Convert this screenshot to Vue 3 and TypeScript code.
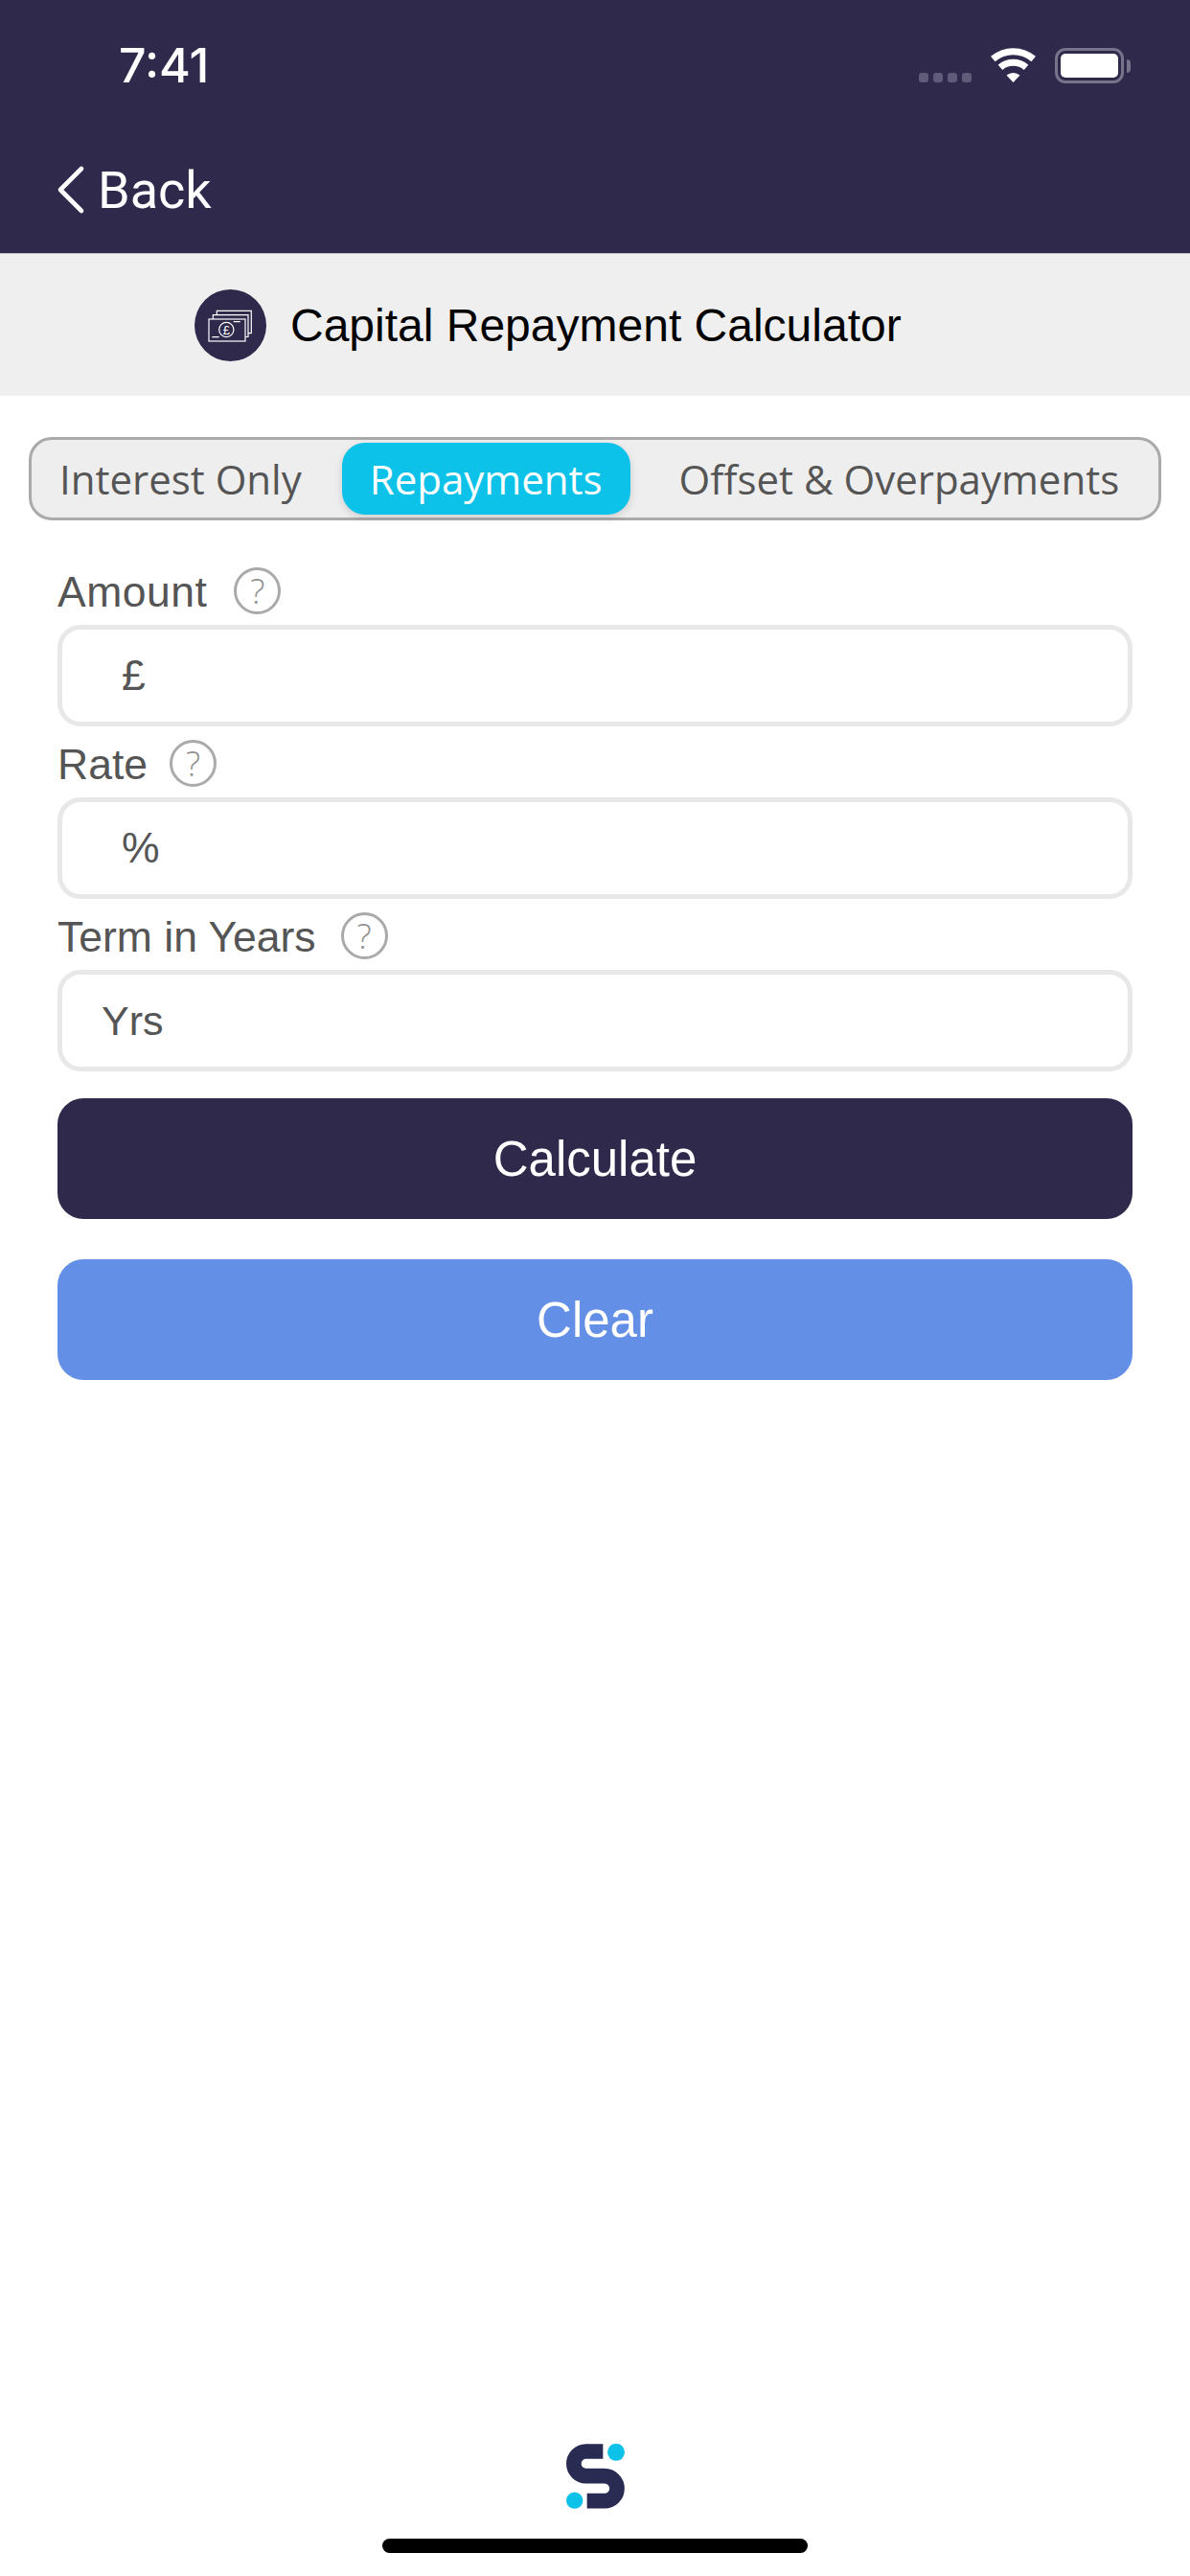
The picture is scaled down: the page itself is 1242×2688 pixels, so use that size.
<script setup lang="ts">
interface Field {
  label: string
  placeholder: string
  inset: string
}

const tabs: string[] = ['Interest Only', 'Repayments', 'Offset & Overpayments']
const activeTab = 'Repayments'
const fields: Field[] = [
  { label: 'Amount', placeholder: '£', inset: 'wide' },
  { label: 'Rate', placeholder: '%', inset: 'wide' },
  { label: 'Term in Years', placeholder: 'Yrs', inset: 'narrow' }
]
</script>

<template>
  <div class="screen">
    <header class="nav">
      <div class="status">
        <span class="time">7:41</span>
        <div class="indicators">
          <div class="signal"><i></i><i></i><i></i><i></i></div>
          <svg class="wifi" width="47" height="36" viewBox="0 0 47 36">
            <path d="M2.3 11.5A32.5 32.5 0 0 1 44.7 11.5" fill="none" stroke="#fff" stroke-width="7" />
            <path d="M10 20.4A20.5 20.5 0 0 1 37 20.4" fill="none" stroke="#fff" stroke-width="7" />
            <path d="M16.5 28.5A11 11 0 0 1 30.5 28.5L23.5 36Z" fill="#fff" />
          </svg>
          <div class="battery"><div class="charge"></div></div>
          <div class="nub"></div>
        </div>
      </div>
      <div class="back">
        <svg width="30" height="52" viewBox="0 0 30 52">
          <path d="M26 4L4 26L26 48" fill="none" stroke="#fff" stroke-width="4.6" stroke-linecap="round" stroke-linejoin="round" />
        </svg>
        <span>Back</span>
      </div>
    </header>

    <section class="title-bar">
      <svg class="title-icon" width="75" height="75" viewBox="0 0 75 75">
        <circle cx="37.5" cy="37.5" r="37.5" fill="#2f2a4c" />
        <g fill="none" stroke="#fff" stroke-width="1.2">
          <path d="M23.3 26.7V22.3H59.3V45.7H56" />
          <path d="M19.3 31V26.7H56V49.5H53" />
          <rect x="15" y="31" width="38" height="23" />
          <circle cx="33.3" cy="42" r="7.6" />
          <path d="M40.7 33.7H47.7M18.3 49.7H25.7" />
        </g>
        <text x="33.3" y="46.6" text-anchor="middle" fill="#fff" class="coin">£</text>
      </svg>
      <h1>Capital Repayment Calculator</h1>
    </section>

    <nav class="tabs">
      <span v-for="tab in tabs" :key="tab" class="tab" :class="{ active: tab === activeTab }">{{ tab }}</span>
    </nav>

    <form class="form" @submit.prevent>
      <div v-for="field in fields" :key="field.label" class="field">
        <div class="label-row">
          <label>{{ field.label }}</label>
          <span class="help">?</span>
        </div>
        <input class="input" :class="field.inset" type="text" :placeholder="field.placeholder" />
      </div>
      <button class="btn calculate" type="button">Calculate</button>
      <button class="btn clear" type="button">Clear</button>
    </form>

    <footer class="footer">
      <svg width="61" height="68" viewBox="90 90 183 203">
        <path d="M205 113.5H152A38.5 38.5 0 0 0 152 190.5H210A39 39 0 0 1 210 268.5H155" fill="none" stroke="#2a2b52" stroke-width="47" />
        <circle cx="246" cy="116" r="27" fill="#0cc2e8" />
        <circle cx="116" cy="267" r="26" fill="#0cc2e8" />
      </svg>
      <div class="home-bar"></div>
    </footer>
  </div>
</template>

<style>
html,
body {
  margin: 0;
  background: #fff;
}
</style>

<style scoped>
.screen {
  width: 1242px;
  height: 2688px;
  display: flex;
  flex-direction: column;
  background: #fff;
  overflow: hidden;
  font-family: "Liberation Sans", Arial, sans-serif;
}
.nav {
  height: 264px;
  box-sizing: border-box;
  flex: none;
  background: #2f2a4c;
  color: #fff;
}
.status {
  height: 172px;
  box-sizing: border-box;
  padding: 39px 62px 0 124px;
  display: flex;
  justify-content: space-between;
  align-items: flex-start;
}
.time {
  font-family: Inter, sans-serif;
  font-weight: 500;
  font-size: 50px;
  line-height: 58px;
}
.indicators {
  display: flex;
  align-items: flex-start;
  padding-top: 11px;
}
.signal {
  display: flex;
  gap: 5px;
  margin: 26px 20px 0 0;
}
.signal i {
  width: 10px;
  height: 10px;
  border-radius: 3px;
  background: #5f5b78;
}
.battery {
  width: 72px;
  height: 37px;
  box-sizing: border-box;
  border: 3px solid #76738a;
  border-radius: 11px;
  padding: 3px;
  margin-left: 20px;
}
.charge {
  width: 100%;
  height: 100%;
  background: #fff;
  border-radius: 5px;
}
.nub {
  width: 4px;
  height: 14px;
  margin: 12px 0 0 3px;
  border-radius: 0 4px 4px 0;
  background: #76738a;
}
.back {
  display: flex;
  align-items: center;
  gap: 13px;
  padding-left: 59px;
  height: 60px;
  margin-top: -4px;
  font-family: Roboto, sans-serif;
  font-size: 54px;
}
.title-bar {
  height: 149px;
  flex: none;
  box-sizing: border-box;
  border-top: 1px solid #bdbdc2;
  background: #efefef;
  display: flex;
  align-items: center;
  gap: 25px;
  padding-left: 203px;
}
.title-icon {
  flex: none;
}
.coin {
  font-family: "Liberation Sans", sans-serif;
  font-size: 13px;
}
h1 {
  margin: 0;
  font-size: 48px;
  font-weight: 400;
  color: #000;
}
.tabs {
  margin: 43px 30px 0 30px;
  height: 87px;
  box-sizing: border-box;
  border: 3px solid #aaaaaa;
  border-radius: 24px;
  background: #eeeeee;
  display: flex;
  align-items: center;
  padding-left: 29px;
  font-family: "Open Sans", sans-serif;
  font-size: 42px;
  color: #555;
}
.tab {
  line-height: 75px;
}
.tab.active {
  margin: 0 51px 0 42px;
  padding: 0 29px;
  background: #0cc2e8;
  border-radius: 24px;
  color: #fff;
  box-shadow: 0 3px 8px rgba(0, 0, 0, 0.14);
}
.form {
  padding: 49px 60px 0;
  display: flex;
  flex-direction: column;
}
.field {
  height: 180px;
  display: flex;
  flex-direction: column;
}
.label-row {
  display: flex;
  align-items: center;
  gap: 26px;
  height: 49px;
  margin-bottom: 11px;
  font-size: 44.5px;
  color: #555;
}
.field:first-child .label-row {
  gap: 28px;
}
.field:nth-child(2) .label-row {
  gap: 23px;
}
.label-row label {
  padding-top: 2px;
}
.field:first-child label {
  letter-spacing: 0.5px;
}
.help {
  width: 49px;
  height: 49px;
  box-sizing: border-box;
  border: 3px solid #aaaaaa;
  border-radius: 50%;
  display: flex;
  align-items: center;
  justify-content: center;
  font-family: "Open Sans", sans-serif;
  font-weight: 300;
  font-size: 36px;
  line-height: 40px;
  color: #909090;
}
.input {
  width: 100%;
  height: 106px;
  box-sizing: border-box;
  border: 5px solid #e8e8e8;
  border-radius: 24px;
  outline: none;
  background: #fff;
  font-family: "Liberation Sans", Arial, sans-serif;
  font-size: 44.5px;
  color: #555;
}
.input::placeholder {
  color: #555;
  opacity: 1;
}
.input.wide {
  padding-left: 62px;
}
.input.narrow {
  padding-left: 41px;
  font-size: 43px;
}
.btn {
  width: 100%;
  height: 126px;
  border: none;
  border-radius: 27px;
  color: #fff;
  font-family: "Liberation Sans", Arial, sans-serif;
  font-size: 51px;
  padding: 0;
}
.calculate {
  background: #2f2a4c;
  margin-top: 14px;
}
.clear {
  background: #6390e6;
  margin-top: 42px;
}
.footer {
  margin-top: auto;
  display: flex;
  flex-direction: column;
  align-items: center;
  padding-bottom: 24px;
}
.home-bar {
  width: 444px;
  height: 15px;
  margin-top: 31px;
  background: #000;
  border-radius: 8px;
}
</style>
